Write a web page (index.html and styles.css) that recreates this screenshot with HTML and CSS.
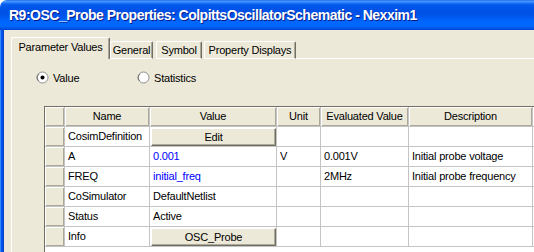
FILE: index.html
```html
<!DOCTYPE html>
<html lang="en">
<head>
    <meta charset="UTF-8">
    <title>R9:OSC_Probe Properties</title>
    <link rel="stylesheet" href="styles.css">
</head>
<body>
    <div class="window">
        <div class="titlebar">R9:OSC_Probe Properties: ColpittsOscillatorSchematic - Nexxim1</div>
        <div class="frame">
            <div class="frame-left"></div>
            <div class="client">
                <div class="tabs">
                    <div class="tab active">Parameter Values</div>
                    <div class="tab tab-general">General</div>
                    <div class="tab tab-symbol">Symbol</div>
                    <div class="tab tab-props">Property Displays</div>
                    <div class="tab-fill"></div>
                </div>
                <div class="panel">
                    <div class="mode">
                        <label class="radio">
                            <svg width="13" height="13" viewBox="0 0 13 13">
                                <circle cx="6.5" cy="6.5" r="5.5" fill="#fff" stroke="#8d8d8d"/>
                                <path d="M2.6 9.8 A5 5 0 0 1 3 3" fill="none" stroke="#6f6f6f"/>
                                <circle cx="6.5" cy="6.5" r="2" fill="#000"/>
                            </svg>
                            Value
                        </label>
                        <label class="radio">
                            <svg width="13" height="13" viewBox="0 0 13 13">
                                <circle cx="6.5" cy="6.5" r="5.5" fill="#fff" stroke="#8d8d8d"/>
                                <path d="M2.6 9.8 A5 5 0 0 1 3 3" fill="none" stroke="#6f6f6f"/>
                            </svg>
                            Statistics
                        </label>
                    </div>
                    <div class="grid-box">
                        <div class="grid">
                            <div class="hd"></div>
                            <div class="hd">Name</div>
                            <div class="hd">Value</div>
                            <div class="hd">Unit</div>
                            <div class="hd">Evaluated Value</div>
                            <div class="hd">Description</div>
                            <div class="hd"></div>

                            <div class="rh"></div>
                            <div class="cell">CosimDefinition</div>
                            <div class="cell btn-cell"><div class="cell-btn">Edit</div></div>
                            <div class="cell"></div>
                            <div class="cell"></div>
                            <div class="cell"></div>
                            <div class="cell"></div>

                            <div class="rh"></div>
                            <div class="cell">A</div>
                            <div class="cell blue">0.001</div>
                            <div class="cell">V</div>
                            <div class="cell">0.001V</div>
                            <div class="cell">Initial probe voltage</div>
                            <div class="cell"></div>

                            <div class="rh"></div>
                            <div class="cell">FREQ</div>
                            <div class="cell blue">initial_freq</div>
                            <div class="cell"></div>
                            <div class="cell">2MHz</div>
                            <div class="cell">Initial probe frequency</div>
                            <div class="cell"></div>

                            <div class="rh"></div>
                            <div class="cell">CoSimulator</div>
                            <div class="cell">DefaultNetlist</div>
                            <div class="cell"></div>
                            <div class="cell"></div>
                            <div class="cell"></div>
                            <div class="cell"></div>

                            <div class="rh"></div>
                            <div class="cell">Status</div>
                            <div class="cell">Active</div>
                            <div class="cell"></div>
                            <div class="cell"></div>
                            <div class="cell"></div>
                            <div class="cell"></div>

                            <div class="rh"></div>
                            <div class="cell">Info</div>
                            <div class="cell btn-cell"><div class="cell-btn">OSC_Probe</div></div>
                            <div class="cell"></div>
                            <div class="cell"></div>
                            <div class="cell"></div>
                            <div class="cell"></div>
                        </div>
                    </div>
                </div>
            </div>
        </div>
    </div>
</body>
</html>
```

FILE: styles.css
```css
body {
    margin: 0;
    background-color: #fff;
    font-family: "Liberation Sans", Arial, sans-serif;
    font-size: 11px;
    letter-spacing: -0.2px;
    color: #000;
}

.window {
    width: 534px;
    height: 252px;
    display: flex;
    flex-direction: column;
    overflow: hidden;
}

.titlebar {
    height: 30px;
    flex-shrink: 0;
    box-sizing: border-box;
    padding: 7px 0 0 9px;
    border-top-left-radius: 7px;
    background: linear-gradient(to bottom, #0a5ee6 0, #4b9bff 1px, #3d8eff 2px, #0a61f0 4px, #0055ea 7px, #0050e4 13px, #0058ee 17px, #0066fe 21px, #0068ff 26px, #005ae8 28px, #0040d4 30px);
    color: #fff;
    font-weight: bold;
    font-size: 14px;
    letter-spacing: -0.5px;
    white-space: nowrap;
    text-shadow: 1px 1px 0 #0a1c8a;
}

.frame {
    flex: 1;
    display: flex;
    min-height: 0;
}

.frame-left {
    width: 4px;
    flex-shrink: 0;
    background: linear-gradient(to right, #3a86f8 0, #3a86f8 1px, #0058ee 1px, #0055e6 3px, #0441cf 3px);
}

.client {
    flex: 1;
    background-color: #ece9d8;
    padding: 7px 0 0 7px;
    display: flex;
    flex-direction: column;
    min-width: 0;
    overflow: hidden;
}

.tabs {
    display: flex;
    align-items: flex-end;
    height: 22px;
    flex-shrink: 0;
}

.tab {
    box-sizing: border-box;
    height: 18px;
    padding-top: 2px;
    text-align: center;
    white-space: nowrap;
    border-top: 1px solid #fff;
    border-left: 1px solid #fff;
    border-right: 1px solid #716f64;
    border-bottom: 1px solid #fff;
    box-shadow: inset -1px 0 0 #aca899;
    border-top-left-radius: 2px;
    border-top-right-radius: 2px;
}

.tab.active {
    width: 99px;
    height: 22px;
    padding-top: 3px;
    border-bottom: none;
}

.tab-general {
    width: 43px;
}

.tab-symbol {
    width: 46px;
    margin-left: 3px;
}

.tab-props {
    width: 92px;
    margin-left: 2px;
}

.tab-fill {
    flex: 1;
    border-bottom: 1px solid #fff;
}

.panel {
    flex: 1;
    border-left: 1px solid #fff;
    display: flex;
    flex-direction: column;
    padding-left: 24px;
    min-height: 0;
}

.mode {
    display: flex;
    margin-top: 12px;
    height: 13px;
    flex-shrink: 0;
}

.radio {
    display: flex;
    align-items: center;
    gap: 4px;
    width: 101px;
}

.radio svg {
    flex-shrink: 0;
}

.grid-box {
    flex: 1;
    margin: 22px 0 0 8px;
    background-color: #fff;
    border-top: 1px solid #716f64;
    border-left: 1px solid #716f64;
}

.grid {
    display: grid;
    grid-template-columns: 19px 84px 126px 43px 87px 123px 20px;
    grid-auto-rows: 19px;
    gap: 1px;
    background-color: #c4c4c4;
    border-bottom: 1px solid #c4c4c4;
    width: max-content;
}

.hd,
.rh {
    background-color: #ece9d8;
    box-shadow: inset 1px 1px 0 #fff, inset -1px -1px 0 #aca899;
    text-align: center;
    line-height: 19px;
    white-space: nowrap;
}

.cell {
    background-color: #fff;
    padding-left: 3px;
    line-height: 19px;
    white-space: nowrap;
    overflow: hidden;
}

.blue {
    color: #0000ff;
}

.btn-cell {
    padding: 1px 0 0 1px;
}

.cell-btn {
    height: 18px;
    box-sizing: border-box;
    background-color: #ece9d8;
    border-top: 1px solid #fff;
    border-left: 1px solid #fff;
    border-right: 1px solid #716f64;
    border-bottom: 1px solid #716f64;
    box-shadow: inset -1px -1px 0 #aca899;
    text-align: center;
    line-height: 16px;
}
```
